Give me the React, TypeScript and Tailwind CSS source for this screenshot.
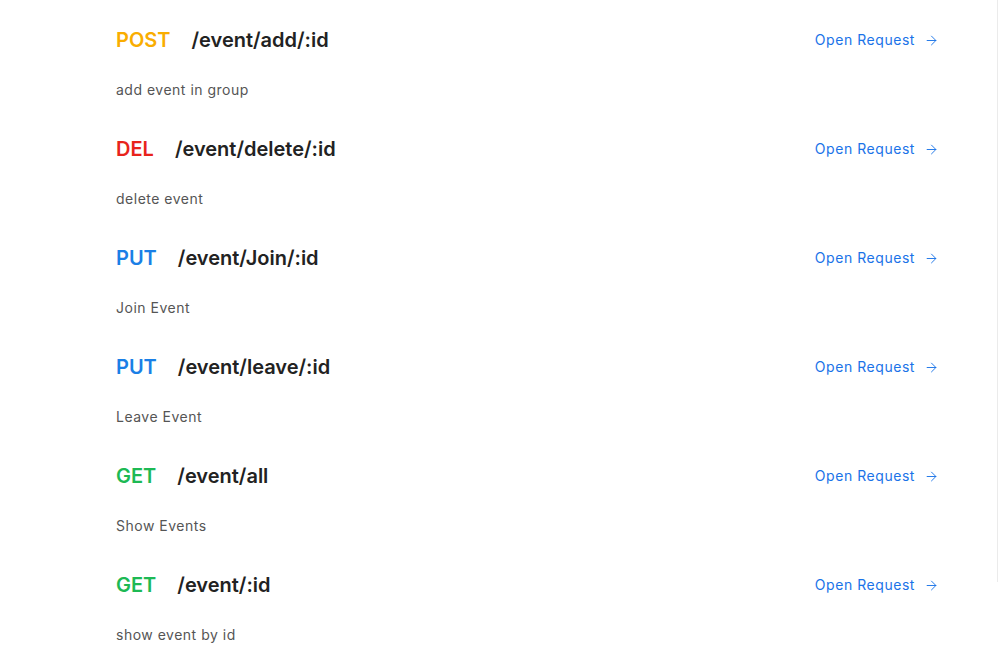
import { ArrowRight } from "lucide-react";

type Endpoint = {
  method: string;
  path: string;
  desc: string;
  color: string;
};

const endpoints: Endpoint[] = [
  { method: "POST", path: "/event/add/:id", desc: "add event in group", color: "text-[#f9ad00]" },
  { method: "DEL", path: "/event/delete/:id", desc: "delete event", color: "text-[#e8231b]" },
  { method: "PUT", path: "/event/Join/:id", desc: "Join Event", color: "text-[#1a7fe6]" },
  { method: "PUT", path: "/event/leave/:id", desc: "Leave Event", color: "text-[#1a7fe6]" },
  { method: "GET", path: "/event/all", desc: "Show Events", color: "text-[#1db954]" },
  { method: "GET", path: "/event/:id", desc: "show event by id", color: "text-[#1db954]" },
];

export default function App() {
  return (
    <div className="relative min-h-[668px] bg-white font-['Inter',sans-serif]">
      <div className="absolute right-[1px] top-0 h-[582px] w-px bg-[#ebebeb]" />
      <div className="pl-[116px] pr-[60px] pt-[28px]">
        {endpoints.map((e, i) => (
          <div key={i} className="mb-[37px]">
            <div className="flex h-6 items-center justify-between">
              <div className="flex items-center text-xl font-semibold leading-6">
                <span className={e.color}>{e.method}</span>
                <span className="ml-[21px] text-[#222]">{e.path}</span>
              </div>
              <a href="#" className="flex items-center text-sm tracking-[0.55px] text-[#1a73e8]">
                Open Request
                <ArrowRight className="ml-[9px] h-[15px] w-[15px]" strokeWidth={1.5} />
              </a>
            </div>
            <p className="mt-[28px] text-sm leading-5 tracking-[0.5px] text-[#555]">{e.desc}</p>
          </div>
        ))}
      </div>
    </div>
  );
}
